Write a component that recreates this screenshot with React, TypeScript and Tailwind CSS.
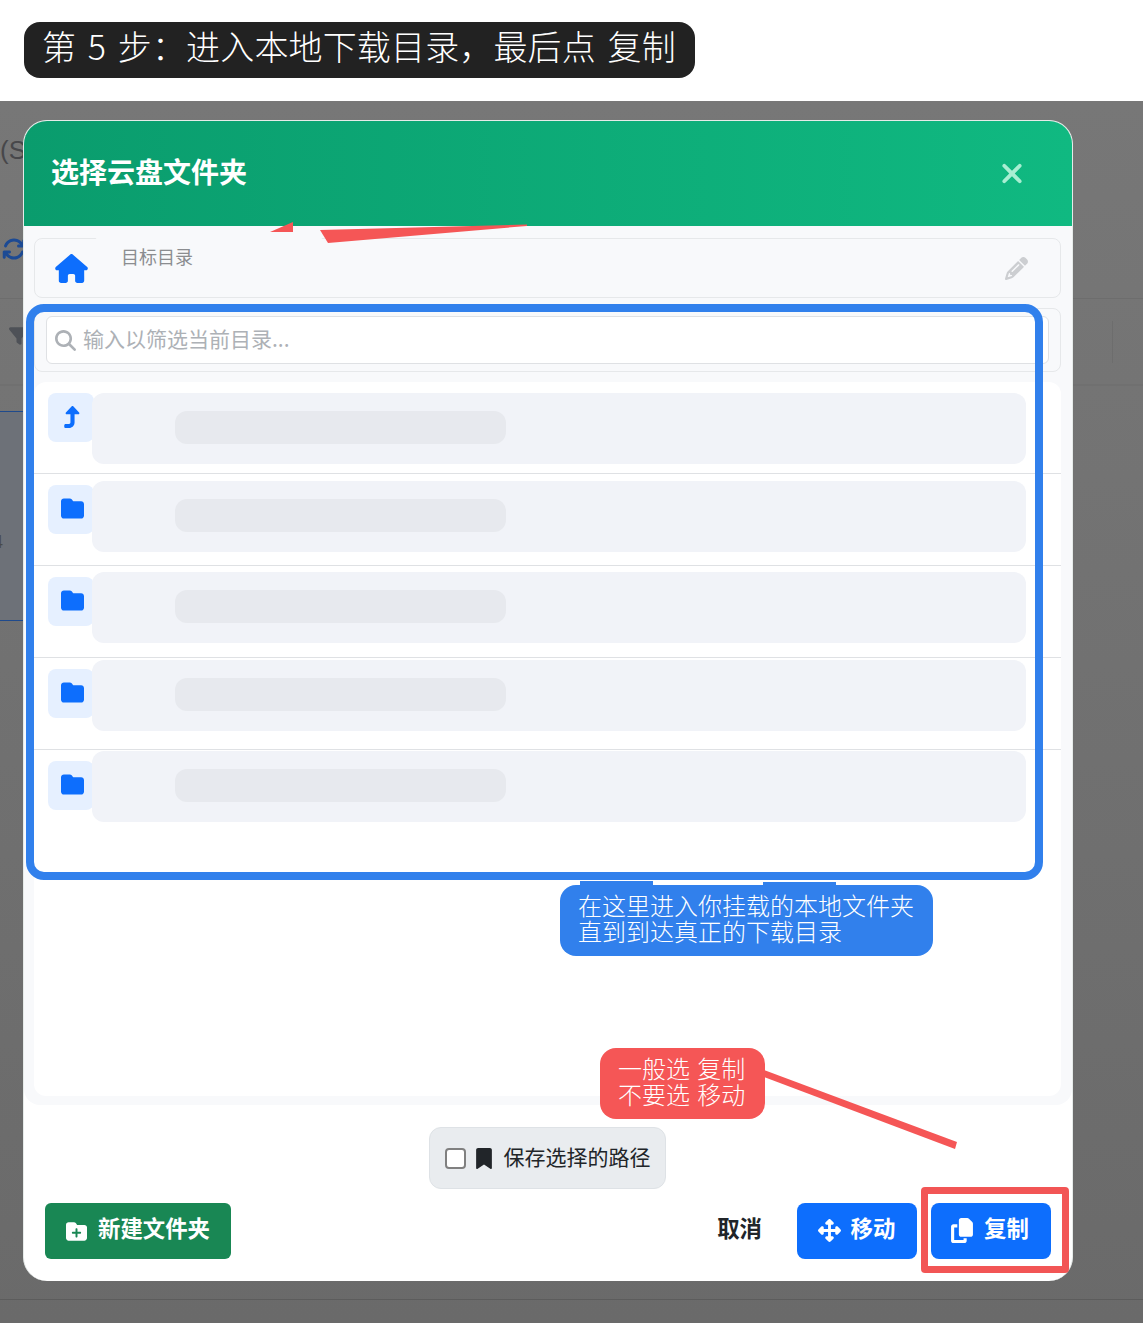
import {
  FaArrowsRotate,
  FaBookmark,
  FaCopy,
  FaFilter,
  FaFolder,
  FaFolderPlus,
  FaHouse,
  FaMagnifyingGlass,
  FaPencil,
  FaTurnUp,
  FaUpDownLeftRight,
  FaXmark,
} from "react-icons/fa6";

const cjk = "font-['Noto_Sans_CJK_SC','Noto_Sans',sans-serif]";

// one row of the folder list, the name is hidden behind a grey mask in the picture
function FolderRow({ up, top, divider }: { up?: boolean; top: string; divider: boolean }) {
  return (
    <div className={`relative h-[92px] ${divider ? "border-b border-[#dfe1e4]" : ""}`}>
      <div className="absolute left-[14px] top-[11px] w-[46px] h-[49px] rounded-lg bg-[#e6f0ff] flex items-center justify-center pl-[2px]">
        {up ? (
          <FaTurnUp className="text-[#0d6efd] w-[17px] h-[22px] -mt-[2px]" />
        ) : (
          <FaFolder className="text-[#0d6efd] w-[23px] h-[23px] -mt-[2px]" />
        )}
      </div>
      <div className={`absolute left-[58px] w-[934px] h-[71px] rounded-xl bg-[#f1f3f8] pt-[18px] pl-[83px] ${top}`}>
        <div className="w-[331px] h-[33px] rounded-xl bg-[#e7e9ee]" />
      </div>
    </div>
  );
}

export default function App() {
  return (
    <div className={`relative w-[1143px] h-[1323px] overflow-hidden bg-white ${cjk}`}>
      {/* caption on top */}
      <div className="h-[101px] pt-[22px] pl-[24px]">
        <div className="w-[671px] h-[56px] rounded-2xl bg-[#222222] text-white text-[34px] font-light leading-[48px] pl-[18px] whitespace-pre [word-spacing:4px] tracking-[0.15px]">
          第 5 步：进入本地下载目录，最后点 复制
        </div>
      </div>

      {/* dimmed page behind the dialog */}
      <div className="relative h-[1222px] bg-[linear-gradient(180deg,#777777,#6a6a6a)] pt-[19px] pl-[23px]">
        <div className="absolute left-0 top-[36px] text-[26px] text-[#47474a] leading-none font-['Liberation_Sans',sans-serif]">(S</div>
        <FaArrowsRotate className="absolute left-[2px] top-[136px] w-[24px] h-[24px] text-[#1c4a94]" />
        <FaFilter className="absolute left-[9px] top-[224px] w-[20px] h-[22px] text-[#4e5157]" />
        <div className="absolute left-0 right-0 top-[197px] h-px bg-[#6d6d6d]" />
        <div className="absolute left-0 right-0 top-[283px] h-[2px] bg-[#707070]" />
        <div className="absolute left-0 w-[24px] top-[310px] h-[210px] bg-[#6d7178] border-y border-[#1f4a8c]" />
        <div className="absolute -left-[7px] top-[432px] text-[18px] leading-none text-[#4a4a4a] font-['Liberation_Sans',sans-serif]">4</div>
        <div className="absolute right-[30px] top-[220px] h-[42px] w-px bg-[#6d6d6d]" />
        <div className="absolute left-0 right-0 top-[1198px] h-px bg-[#5c5c5c]" />

        {/* dialog */}
        <div className="relative w-[1050px] h-[1161px] rounded-[24px] bg-white overflow-hidden flex flex-col border-t border-l border-r border-[#e6ebe9]">
          <div className="h-[105px] shrink-0 bg-[linear-gradient(90deg,#0a9c6d,#10b981)] flex items-center justify-between pl-[27px] pr-[48px]">
            <div className="text-[28px] font-bold text-white leading-none -mt-[6px]">选择云盘文件夹</div>
            <FaXmark className="w-[24px] h-[31px] text-[#a8eed2]" />
          </div>

          <div className="h-[879px] shrink-0 bg-[#f8f9fb] rounded-b-2xl pl-[10px] pr-[11px] pt-[12px]">
            {/* target directory */}
            <div className="relative h-[60px] rounded-lg border border-[#e6e8ea] flex items-center justify-between pl-[20px] pr-[32px]">
              <FaHouse className="w-[33px] h-[29px] text-[#0d6efd] mt-[1px]" />
              <div className="absolute left-[57px] -top-[6px] w-[234px] h-[64px] rounded-2xl bg-[#f8f9fb] pl-[29px] pt-[9px] text-[18px] leading-[28px] text-[#8b8d90]">目标目录</div>
              <FaPencil className="w-[23px] h-[23px] text-[#ccced1]" />
            </div>

            {/* filter */}
            <div className="mt-[10px] h-[64px] rounded-lg border border-[#e6e8ea] px-[11px] pt-[7px]">
              <div className="h-[48px] rounded-md border border-[#dfe1e4] bg-white flex items-center pl-[8px] gap-[7px]">
                <FaMagnifyingGlass className="w-[21px] h-[21px] text-[#adb1b6]" />
                <span className="text-[21px] text-[#adb1b6] leading-none pb-[4px]">输入以筛选当前目录...</span>
              </div>
            </div>

            {/* folder list */}
            <div className="mt-[10px] h-[714px] rounded-xl bg-white">
              <FolderRow up top="top-[11px]" divider />
              <FolderRow top="top-[7px]" divider />
              <FolderRow top="top-[6px]" divider />
              <FolderRow top="top-[2px]" divider />
              <FolderRow top="top-[1px]" divider={false} />
            </div>
          </div>

          {/* footer */}
          <div className="flex-1 flex flex-col items-center pt-[22px] px-[21px]">
            <div className="w-[237px] h-[62px] mr-[2px] rounded-xl bg-[#e9ecef] border border-[#dee2e6] flex items-center pl-[15px] text-[21px] text-[#212529]">
              <span className="w-[21px] h-[21px] rounded-[4px] border-2 border-[#808080] bg-white shrink-0" />
              <FaBookmark className="w-[16px] h-[21px] ml-[10px] mr-[12px] text-[#212529]" />
              <span className="leading-none pb-[4px]">保存选择的路径</span>
            </div>
            <div className="w-full mt-[14px] flex items-center text-[22.4px] font-bold">
              <div className="w-[186px] h-[56px] rounded-md bg-[#198754] text-white flex items-center pl-[20px] gap-[10px]">
                <FaFolderPlus className="w-[23px] h-[21px]" />
                <span className="pb-[6px]">新建文件夹</span>
              </div>
              <div className="ml-auto mr-[35px] pb-[6px] text-[#212529]">取消</div>
              <div className="w-[120px] h-[56px] pb-[2px] pr-[1px] rounded-lg bg-[#0d6efd] text-white flex items-center justify-center gap-[10px]">
                <FaUpDownLeftRight className="w-[23px] h-[23px]" />
                <span className="pb-[4px]">移动</span>
              </div>
              <div className="w-[120px] h-[56px] pb-[2px] pr-[3px] ml-[14px] rounded-lg bg-[#0d6efd] text-white flex items-center justify-center gap-[10px]">
                <FaCopy className="w-[24px] h-[25px]" />
                <span className="pb-[4px]">复制</span>
              </div>
            </div>
          </div>
        </div>
      </div>

      {/* annotations drawn over the screenshot */}
      <div className="absolute left-[26px] top-[304px] w-[1017px] h-[576px] rounded-[18px] border-[8px] border-[#3180ec] pointer-events-none" />
      <div className="absolute left-[580px] top-[881px] w-[73px] h-[4px] bg-[#3180ec]" />
      <div className="absolute left-[763px] top-[882px] w-[73px] h-[3px] bg-[#3180ec]" />
      <div className="absolute left-[560px] top-[885px] w-[373px] h-[71px] rounded-2xl bg-[#3180ec] text-white text-[24px] font-light leading-[26px] pl-[18px] pt-[7px]">
        <div>在这里进入你挂载的本地文件夹</div>
        <div>直到到达真正的下载目录</div>
      </div>

      <svg className="absolute left-0 top-0 pointer-events-none" width="1143" height="1323">
        <polygon points="270,232 293,222 293,232" fill="#f55656" />
        <polygon points="320,230 527,224.5 527,226 328,243" fill="#f55656" />
        <polygon points="764,1070 957,1142 955,1149 764,1077" fill="#f55656" />
      </svg>

      <div className="absolute left-[600px] top-[1048px] w-[165px] h-[71px] rounded-2xl bg-[#f55656] text-white text-[24px] font-light leading-[26px] pl-[18px] pt-[7px] whitespace-pre [word-spacing:2px]">
        <div>一般选 复制</div>
        <div>不要选 移动</div>
      </div>
      <div className="absolute left-[921px] top-[1187px] w-[148px] h-[86px] rounded-sm border-[7px] border-[#f25555] pointer-events-none" />
    </div>
  );
}
